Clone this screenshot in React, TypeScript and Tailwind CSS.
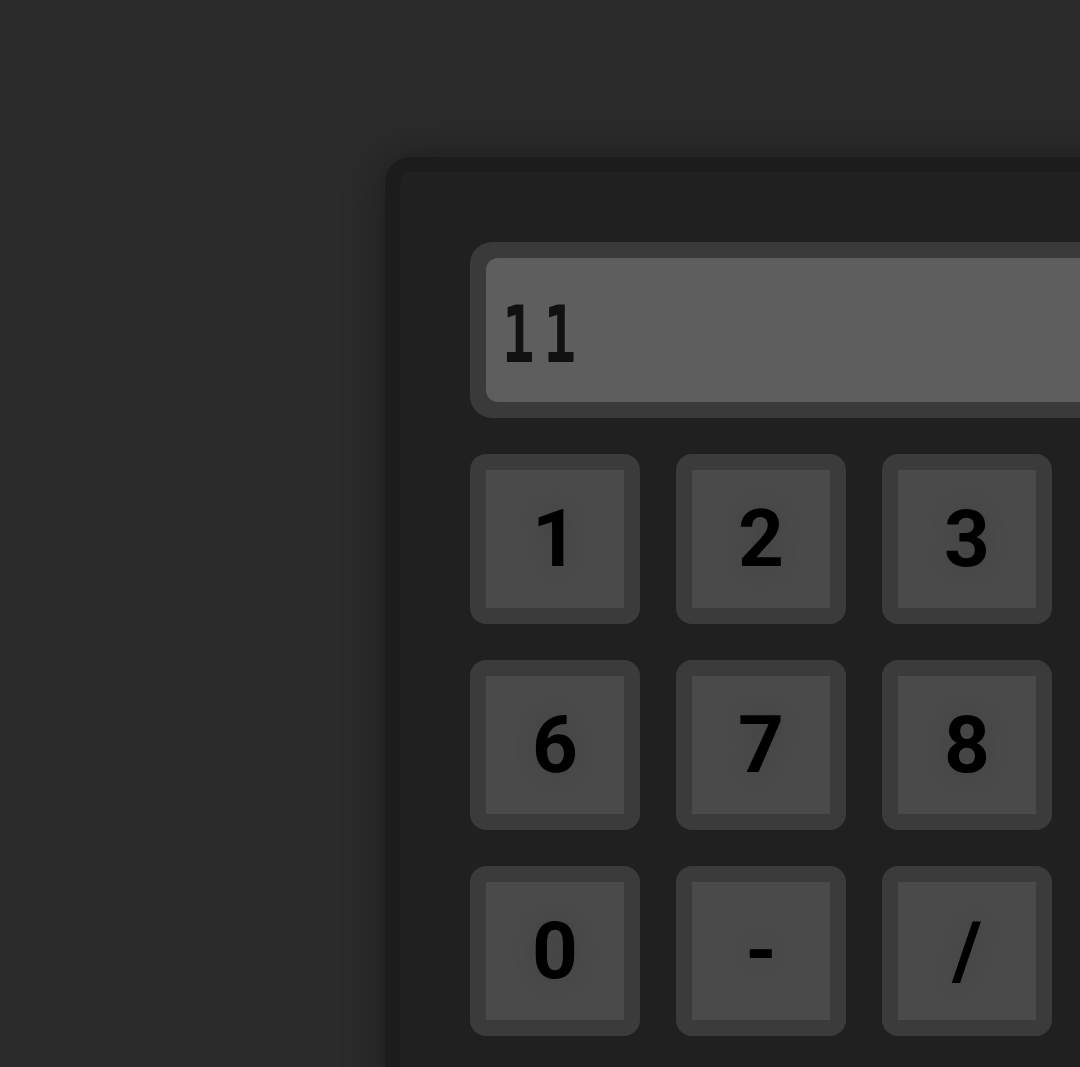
const keys = ['1', '2', '3', '4', '5', '6', '7', '8', '9', '+', '0', '-', '/', '*', '=']

function Key({ label }: { label: string }) {
  return (
    <button className="h-[170px] w-[170px] rounded-[16px] bg-[#3b3b3b] p-4">
      <div className="flex h-full w-full items-center justify-center bg-[#4a4a4a] font-[Roboto] text-[80px] font-bold leading-none text-black [text-shadow:0_0_24px_rgba(0,0,0,0.12)]">
        {label}
      </div>
    </button>
  )
}

export default function App() {
  return (
    <div className="h-[1067px] w-full overflow-hidden bg-[#2b2b2b] pl-[385px] pt-[157px]">
      <div className="w-[1164px] rounded-[26px] border-[15px] border-[#1c1c1c] bg-[#202020] p-[70px] shadow-[0_0_40px_rgba(0,0,0,0.35)]">
        <div className="rounded-[22px] bg-[#3a3a3a] p-4">
          <div className="flex h-[144px] items-center rounded-[12px] bg-[#5e5e5e] pl-[16px] pt-[12px] [font-family:DejaVu_Sans_Mono,monospace]">
            <span className="inline-block origin-left scale-x-[0.82] scale-y-[1.18] text-[66px] font-bold leading-none tracking-[11px] text-[#111]">
              11
            </span>
          </div>
        </div>
        <div className="mt-[36px] grid grid-cols-5 gap-[36px]">
          {keys.map(k => <Key key={k} label={k} />)}
        </div>
      </div>
    </div>
  )
}
